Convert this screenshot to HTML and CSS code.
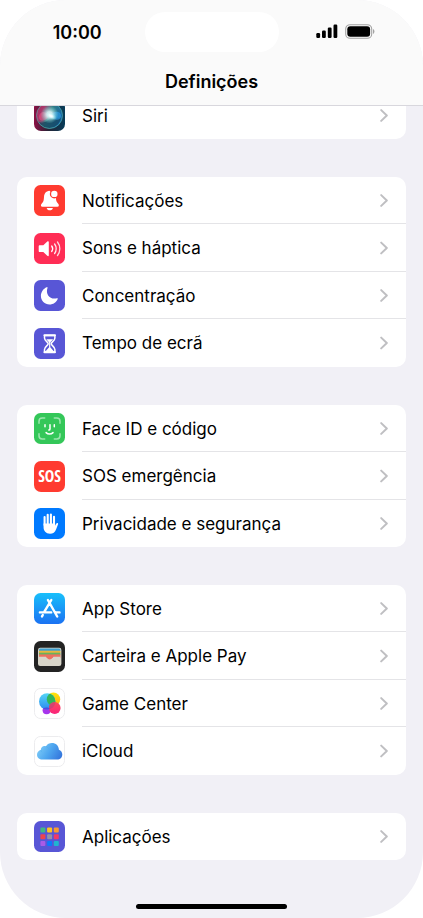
FILE: index.html
```html
<!DOCTYPE html>
<html lang="pt">
<head>
<meta charset="utf-8">
<meta name="viewport" content="width=device-width, initial-scale=1">
<title>Definições</title>
<link rel="stylesheet" href="styles.css">
</head>
<body>
<svg class="defs" aria-hidden="true">
  <defs>
    <symbol id="chevron" viewBox="0 0 8 14"><path d="M1.2 1.6 6.8 7 1.2 12.4" fill="none" stroke="#bfbfc2" stroke-width="2" stroke-linecap="round" stroke-linejoin="round"/></symbol>
  </defs>
</svg>
<div class="phone">
  <header class="top">
    <div class="status">
      <time class="clock">10:00</time>
      <span class="island"></span>
      <span class="indicators">
        <svg width="22" height="14" viewBox="0 0 22 14" aria-hidden="true">
          <rect x="0.3" y="9" width="3.8" height="5" rx="1.2"/><rect x="6" y="6.6" width="3.8" height="7.4" rx="1.2"/><rect x="11.8" y="3.6" width="3.8" height="10.4" rx="1.2"/><rect x="17.5" y="0.6" width="3.8" height="13.4" rx="1.2"/>
        </svg>
        <svg width="30" height="15" viewBox="0 0 30 15" aria-hidden="true">
          <rect x="0.7" y="0.7" width="26" height="13.6" rx="4.4" fill="none" stroke="#a3a3a3" stroke-width="1.1"/>
          <rect x="2.3" y="2.3" width="22.8" height="10.4" rx="3"/>
          <path d="M28 5.1c1.9.8 1.9 4 0 4.8z" fill="#a3a3a3"/>
        </svg>
      </span>
    </div>
    <h1 class="title">Definições</h1>
  </header>

  <main class="list">
    <ul class="group">
      <li class="row"><a href="#siri">
        <svg class="icon" viewBox="0 0 31 31" aria-hidden="true">
          <defs>
            <linearGradient id="siriBg" x1="0" x2="1"><stop offset="0" stop-color="#8c1044"/><stop offset=".45" stop-color="#272335"/><stop offset="1" stop-color="#063c58"/></linearGradient>
            <linearGradient id="siriOrb" x1="0" y1="0" x2="1" y2=".4"><stop offset="0" stop-color="#b02a60"/><stop offset=".32" stop-color="#a83a6b"/><stop offset=".58" stop-color="#337e83"/><stop offset="1" stop-color="#1768a5"/></linearGradient>
            <radialGradient id="siriGlow"><stop offset="0" stop-color="#fff"/><stop offset=".3" stop-color="#eefcff" stop-opacity=".85"/><stop offset="1" stop-color="#7de6e0" stop-opacity="0"/></radialGradient>
          </defs>
          <rect width="31" height="31" rx="7" fill="url(#siriBg)"/>
          <circle cx="15.5" cy="15.5" r="13" fill="url(#siriOrb)"/>
          <path d="M4 21c5 4 11-1 12-3s6 2 11-1c-1 7-6 11-12 11S6 26 4 21z" fill="#16435c" opacity=".7"/>
          <path d="M15 16c5-6 12-5 12 0s-7 5-12 0z" fill="#2c98e0" opacity=".7"/>
          <path d="M15 16C11 9 5 12 5 17s7 5 10-1z" fill="#ef5888" opacity=".55"/>
          <circle cx="15.500" cy="14.500" r="9" fill="url(#siriGlow)"/>
          <ellipse cx="17" cy="16" rx="6" ry="3.500" transform="rotate(28 17 16)" fill="url(#siriGlow)"/>
          <circle cx="15.500" cy="15.500" r="13" fill="none" stroke="#53b7b2" stroke-width=".8" opacity=".8"/>
        </svg>
        <span class="label">Siri</span><svg class="chevron" aria-hidden="true"><use href="#chevron"/></svg></a></li>
    </ul>

    <ul class="group">
      <li class="row"><a href="#notificacoes">
        <svg class="icon" viewBox="0 0 31 31" aria-hidden="true">
          <rect width="31" height="31" rx="6.500" fill="#ff3b30"/>
          <path d="M15.500 5.800c-3.800.3-5.300 3-5.500 6.200-.2 3.400-.5 4.800-2.200 6.500-1.300 1.300-1.100 3.300.6 3.300h15c1.700 0 1.900-2 .6-3.300-1.600-1.600-2-3-2.200-6.200z" fill="#fff"/>
          <path d="M12.700 23h6.200c-.4 3.100-5.800 3.100-6.200 0z" fill="#fff"/>
          <circle cx="20.200" cy="9" r="4.400" fill="#ff3b30"/><circle cx="20.300" cy="8.900" r="3.200" fill="#fff"/>
        </svg>
        <span class="label">Notificações</span><svg class="chevron" aria-hidden="true"><use href="#chevron"/></svg></a></li>
      <li class="row"><a href="#sons">
        <svg class="icon" viewBox="0 0 31 31" aria-hidden="true">
          <rect width="31" height="31" rx="6.500" fill="#ff2d55"/>
          <path d="M5.800 12.300h3.500l4-3.700c.8-.7 1.500-.4 1.500.6v13c0 1-.7 1.300-1.500.6l-4-3.700H5.800c-.7 0-1.100-.4-1.100-1.100v-4.600c0-.7.4-1.100 1.100-1.100z" fill="#fff"/>
          <g fill="none" stroke="#fff" stroke-width="1.300" stroke-linecap="round"><path d="M17.700 13c1.100 1.500 1.100 4 0 5.500"/><path d="M20.600 11c2.100 2.700 2.100 6.800 0 9.500" opacity=".9"/><path d="M23.500 9c3.100 4 3.100 9.500 0 13.500" opacity=".8"/></g>
        </svg>
        <span class="label">Sons e háptica</span><svg class="chevron" aria-hidden="true"><use href="#chevron"/></svg></a></li>
      <li class="row"><a href="#concentracao">
        <svg class="icon" viewBox="0 0 31 31" aria-hidden="true">
          <rect width="31" height="31" rx="6.500" fill="#5856d6"/>
          <path d="M12.700 7.200c.6-.3 1 .1.800.7-2.300 6.300 2.600 12 9.400 10.300.7-.2 1.100.2.800.8-1.400 3.300-4.500 5.500-8.200 5.500-4.800 0-8.600-3.700-8.600-8.500 0-3.900 2.400-7.400 5.800-8.800z" fill="#fff"/>
        </svg>
        <span class="label">Concentração</span><svg class="chevron" aria-hidden="true"><use href="#chevron"/></svg></a></li>
      <li class="row"><a href="#tempo">
        <svg class="icon" viewBox="0 0 31 31" aria-hidden="true">
          <rect width="31" height="31" rx="6.500" fill="#5856d6"/>
          <path d="M10.500 7.600h10.400v2.300c0 3-3.700 4-3.700 5.800s3.700 2.800 3.700 5.800v2.300H10.500v-2.300c0-3 3.700-4 3.700-5.800s-3.700-2.800-3.700-5.800z" fill="none" stroke="#fff" stroke-width="1.500"/>
          <path d="M10.500 7.200h10.400M10.500 24.200h10.400" stroke="#fff" stroke-width="2.100" stroke-linecap="round"/>
          <path d="M12.200 11.300h7c-.8 1.200-2.500 2-2.900 3.500v4.500l3.300 3.600h-7.800l3.300-3.600v-4.500c-.4-1.500-2.100-2.300-2.900-3.500z" fill="#fff"/>
        </svg>
        <span class="label">Tempo de ecrã</span><svg class="chevron" aria-hidden="true"><use href="#chevron"/></svg></a></li>
    </ul>

    <ul class="group">
      <li class="row"><a href="#faceid">
        <svg class="icon" viewBox="0 0 31 31" aria-hidden="true">
          <rect width="31" height="31" rx="6.500" fill="#34c759"/>
          <path d="M5 10.300V8.200C5 6 6 5 8.200 5h2.500M20.300 5h2.500C25 5 26 6 26 8.200v2.100M26 20.700v2.100c0 2.200-1 3.200-3.200 3.200h-2.500M10.700 26H8.200C6 26 5 25 5 22.800v-2.100" fill="none" stroke="#9be6ae" stroke-width="1.500" stroke-linecap="round"/>
          <path d="M11 11.700v2M20.300 11.700v2M16 11.700v4.200c0 .8-.4 1.200-1.200 1.200M12.100 19.600c1.900 1.900 5 1.900 6.900 0" fill="none" stroke="#fff" stroke-width="1.500" stroke-linecap="round"/>
        </svg>
        <span class="label">Face ID e código</span><svg class="chevron" aria-hidden="true"><use href="#chevron"/></svg></a></li>
      <li class="row"><a href="#sos">
        <span class="icon sos" aria-hidden="true">SOS</span>
        <span class="label">SOS emergência</span><svg class="chevron" aria-hidden="true"><use href="#chevron"/></svg></a></li>
      <li class="row"><a href="#privacidade">
        <svg class="icon" viewBox="0 0 31 31" aria-hidden="true">
          <rect width="31" height="31" rx="6.500" fill="#007aff"/>
          <path d="M10.600 9v8M13.700 6.800V16M16.900 6.600V16M20 8.800V17" stroke="#fff" stroke-width="2.100" stroke-linecap="round"/>
          <path d="M9.550 15.500h11.500v2.300l1.100-2.100c.7-1.300 2.300-.9 1.900.5l-1.900 5.100c-1.100 3-3.200 4.500-6.100 4.500-4.200 0-6.500-2.800-6.500-6.700z" fill="#fff"/>
        </svg>
        <span class="label">Privacidade e segurança</span><svg class="chevron" aria-hidden="true"><use href="#chevron"/></svg></a></li>
    </ul>

    <ul class="group">
      <li class="row"><a href="#appstore">
        <svg class="icon" viewBox="0 0 31 31" aria-hidden="true">
          <defs><linearGradient id="store" x2="0" y2="1"><stop offset="0" stop-color="#18bffb"/><stop offset="1" stop-color="#1b72f2"/></linearGradient></defs>
          <rect width="31" height="31" rx="6.500" fill="url(#store)"/>
          <g fill="none" stroke="#fff" stroke-width="2.400" stroke-linecap="round"><path d="M17.300 7 10.400 18.600M13.900 7l9.300 16.500M5.900 19.400h11.300M21.600 19.400h3.900M8.800 22l-.8 1.400"/></g>
        </svg>
        <span class="label">App Store</span><svg class="chevron" aria-hidden="true"><use href="#chevron"/></svg></a></li>
      <li class="row"><a href="#carteira">
        <svg class="icon" viewBox="0 0 31 31" aria-hidden="true">
          <rect width="31" height="31" rx="6.500" fill="#232323"/>
          <rect x="4" y="6.700" width="23.400" height="18.200" rx="2.200" fill="#d8d5c9"/>
          <path d="M5 10V9.300c0-1.100.7-1.700 1.800-1.700h17.800c1.100 0 1.800.6 1.800 1.700v.7z" fill="#3c9fd0"/>
          <path d="M5 9.700h21.400v2.400H5z" fill="#eab53c"/><path d="M5 11.700h21.400v2.400H5z" fill="#67b35b"/><path d="M5 13.400h21.400V17H5z" fill="#ec7160"/>
          <path d="M5 15.700h6.500c1.400 0 1.500 2.600 4.200 2.600s2.800-2.600 4.200-2.600h6.500v6.600c0 1.100-.7 1.700-1.800 1.700H6.800c-1.100 0-1.800-.6-1.800-1.700z" fill="#d8d5c9"/>
          <path d="M11.500 15.600h8.400c-1.400 0-1.500 2.900-4.200 2.900s-2.800-2.900-4.200-2.900z" fill="#ec7160"/>
        </svg>
        <span class="label">Carteira e Apple Pay</span><svg class="chevron" aria-hidden="true"><use href="#chevron"/></svg></a></li>
      <li class="row"><a href="#gamecenter">
        <svg class="icon" viewBox="0 0 31 31" aria-hidden="true">
          <defs>
            <linearGradient id="gcBlue" x2="0" y2="1"><stop offset="0" stop-color="#55d5f5"/><stop offset="1" stop-color="#2c8cf0"/></linearGradient>
            <linearGradient id="gcYellow" x2="0" y2="1"><stop offset="0" stop-color="#ffe60a"/><stop offset="1" stop-color="#ffae16"/></linearGradient>
            <linearGradient id="gcPink" x2="0" y2="1"><stop offset="0" stop-color="#ff4b58"/><stop offset="1" stop-color="#fa237d"/></linearGradient>
            <clipPath id="gcClip"><circle cx="13.200" cy="13.400" r="8.200"/></clipPath>
          </defs>
          <rect x=".5" y=".5" width="30" height="30" rx="6" fill="#fff" stroke="#ececee"/>
          <circle cx="12.600" cy="22.200" r="4" fill="#a735ec"/>
          <circle cx="19.500" cy="11.300" r="6.700" fill="url(#gcYellow)"/>
          <circle cx="13.200" cy="13.400" r="8.200" fill="url(#gcBlue)"/>
          <circle cx="19.500" cy="11.300" r="6.700" fill="#32b65b" clip-path="url(#gcClip)"/>
          <circle cx="20.700" cy="20" r="5.900" fill="url(#gcPink)"/>
          <circle cx="20.700" cy="20" r="5.900" fill="#b3447d" opacity=".55" clip-path="url(#gcClip)"/>
          <path d="M9 20.500c2-1.600 5-1.400 7 .3-2.300 1.100-4.700 1.100-7-.3z" fill="#4f4be0"/>
        </svg>
        <span class="label">Game Center</span><svg class="chevron" aria-hidden="true"><use href="#chevron"/></svg></a></li>
      <li class="row"><a href="#icloud">
        <svg class="icon" viewBox="0 0 31 31" aria-hidden="true">
          <defs><linearGradient id="cloud" x1="0" y1=".3" x2="1" y2=".7"><stop offset="0" stop-color="#80cdf8"/><stop offset=".5" stop-color="#4ea6ef"/><stop offset="1" stop-color="#3577dd"/></linearGradient></defs>
          <rect x=".5" y=".5" width="30" height="30" rx="6" fill="#fff" stroke="#ececee"/>
          <path d="M8.400 23.600C5.300 23.600 3 21.500 3 18.700c0-2.400 1.600-4.200 3.800-4.700-.2-2.800 2.600-4.800 5.200-3.700 1.300-2.200 3.400-3.300 5.900-3.300 3.900 0 6.800 2.700 7 6.700 2.100.7 3.400 2.500 3.400 4.800 0 3-2.200 5.100-5.200 5.100z" fill="url(#cloud)"/>
          <path d="M12 10.300c1.200.5 2 1.300 2.400 2.400M6.800 14c.1 1 .5 1.700 1.100 2.300" fill="none" stroke="#4aa9eb" stroke-width=".8" opacity=".6"/>
        </svg>
        <span class="label">iCloud</span><svg class="chevron" aria-hidden="true"><use href="#chevron"/></svg></a></li>
    </ul>

    <ul class="group">
      <li class="row"><a href="#aplicacoes">
        <svg class="icon" viewBox="0 0 31 31" aria-hidden="true">
          <rect width="31" height="31" rx="6.500" fill="#5856d6"/>
          <rect x="6.400" y="6.500" width="5" height="5" rx="1" fill="#41b883"/><rect x="13.100" y="6.500" width="5" height="5" rx="1" fill="#ffc41f"/><rect x="19.800" y="6.500" width="5" height="5" rx="1" fill="#f79a32"/>
          <rect x="6.400" y="13.200" width="5" height="5" rx="1" fill="#ed434f"/><rect x="13.100" y="13.200" width="5" height="5" rx="1" fill="#9492a5"/><rect x="19.800" y="13.200" width="5" height="5" rx="1" fill="#f13a67"/>
          <rect x="6.400" y="19.900" width="5" height="5" rx="1" fill="#a85be6"/><rect x="13.100" y="19.900" width="5" height="5" rx="1" fill="#0d78fb"/><rect x="19.800" y="19.900" width="5" height="5" rx="1" fill="#20b4cf"/>
        </svg>
        <span class="label">Aplicações</span><svg class="chevron" aria-hidden="true"><use href="#chevron"/></svg></a></li>
    </ul>
  </main>

  <div class="home"></div>
</div>
</body>
</html>
```
FILE: styles.css
```css
* {
  box-sizing: border-box;
}

body {
  margin: 0;
  background: #fff;
  color: #000;
  font-family: Inter, "Liberation Sans", sans-serif;
  font-size: 17px;
}

.defs {
  display: none;
}

.phone {
  display: flex;
  flex-direction: column;
  min-height: 100vh;
  background: #f1f0f6;
  border-radius: 66px;
  overflow: hidden;
}

.top {
  position: relative;
  z-index: 1;
  padding-top: 12px;
  background: #fafafa;
  border-bottom: 1px solid #d8d7dd;
}

.status {
  display: grid;
  grid-template-columns: 1fr 134px 1fr;
  align-items: center;
}

.clock {
  padding-left: 10px;
  text-align: center;
  font-size: 18px;
  font-weight: 600;
}

.island {
  height: 40px;
  border-radius: 20px;
  background: #fff;
}

.indicators {
  display: flex;
  justify-content: center;
  align-items: center;
  gap: 7px;
  padding: 0 10px 2px 0;
}

.title {
  margin: 0;
  padding: 18px 0 11px;
  text-align: center;
  font-size: 18px;
  line-height: 24px;
  font-weight: 600;
}

.list {
  display: flex;
  flex-direction: column;
  gap: 38px;
  margin-top: -14px;
  padding: 0 17px;
}

.group {
  margin: 0;
  padding: 0;
  list-style: none;
  background: #fff;
  border-radius: 10px;
}

.row a {
  display: flex;
  align-items: center;
  height: 47px;
  padding-left: 17px;
  color: inherit;
  text-decoration: none;
}

.row:nth-child(even) a {
  height: 48px;
}

.icon {
  flex: none;
  width: 31px;
  height: 31px;
  margin-right: 17px;
}

.sos {
  display: grid;
  place-items: center;
  border-radius: 7px;
  background: #ff3b30;
  color: #fff;
  font-family: "Open Sans Condensed", "Liberation Sans Narrow", "DejaVu Sans Condensed", sans-serif;
  font-size: 16px;
  font-weight: 700;
}

.label {
  flex: 1;
  align-self: stretch;
  display: flex;
  align-items: center;
}

.row + .row .label,
.row + .row .chevron {
  box-shadow: 0 -1px #e4e4e7;
}

.chevron {
  flex: none;
  align-self: stretch;
  width: 26px;
  height: auto;
  padding-right: 18px;
}

.home {
  align-self: center;
  width: 151px;
  height: 5px;
  margin-top: auto;
  margin-bottom: 9px;
  border-radius: 3px;
  background: #000;
}
```
